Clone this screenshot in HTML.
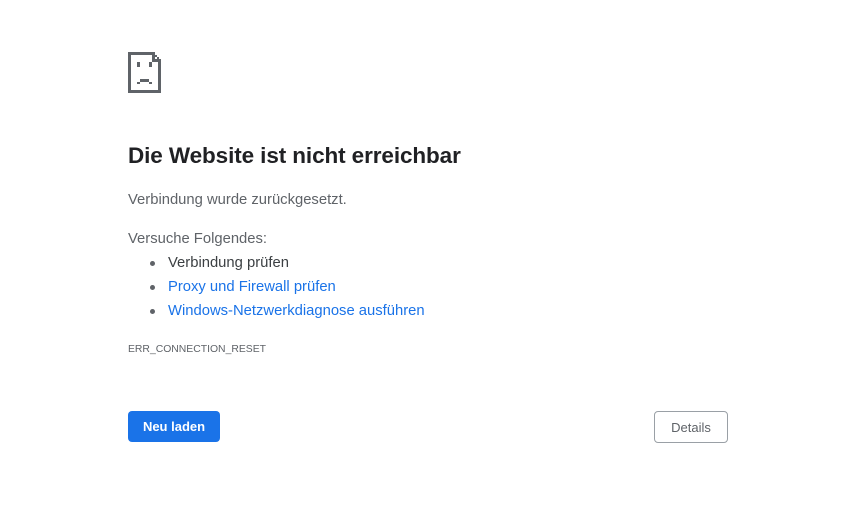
<!DOCTYPE html>
<html><head><meta charset="utf-8"><style>
html,body{margin:0;padding:0;background:#fff;width:867px;height:525px;overflow:hidden;font-family:"Liberation Sans",Arial,sans-serif}
.a{position:absolute;white-space:nowrap}
h1{position:absolute;left:128px;top:143px;margin:0;font-size:22.5px;font-weight:bold;color:#202124;letter-spacing:-0.1px}
.t{font-size:14.8px;color:#5f6368}
.l{color:#1a73e8}
.dot{position:absolute;width:5px;height:5px;border-radius:50%;background:#5f6368;left:150px}
.btn{position:absolute;box-sizing:border-box;font-size:13px;border-radius:4px;display:flex;align-items:center;justify-content:center}
</style></head><body>
<svg class="a" style="left:124px;top:48px" width="42" height="50" viewBox="124 48 42 50">
<g fill="#5f6368">
<rect x="128" y="52" width="25" height="3"/>
<rect x="128" y="52" width="3" height="41"/>
<rect x="128" y="90" width="33" height="3"/>
<rect x="158" y="60" width="3" height="33"/>
<rect x="152" y="52" width="3" height="10"/>
<rect x="152" y="59" width="9" height="3"/>
<rect x="155" y="55" width="2" height="2"/>
<rect x="157" y="57" width="2" height="2"/>
<rect x="137" y="62" width="3" height="5"/>
<rect x="149" y="62" width="3" height="5"/>
<rect x="140" y="79" width="9" height="3"/>
<rect x="137" y="82" width="3" height="2"/>
<rect x="149" y="82" width="3" height="2"/>
</g></svg>
<h1>Die Website ist nicht erreichbar</h1>
<div class="a t" style="left:128px;top:192px">Verbindung wurde zurückgesetzt.</div>
<div class="a t" style="left:128px;top:231px">Versuche Folgendes:</div>
<div class="dot" style="top:261px"></div>
<div class="a t" style="left:168px;top:255px;color:#3c4043">Verbindung prüfen</div>
<div class="dot" style="top:285px"></div>
<div class="a t l" style="left:168px;top:279px">Proxy und Firewall prüfen</div>
<div class="dot" style="top:309px"></div>
<div class="a t l" style="left:168px;top:303px">Windows-Netzwerkdiagnose ausführen</div>
<div class="a" style="left:128px;top:344px;font-size:10.4px;color:#5f6368">ERR_CONNECTION_RESET</div>
<div class="btn" style="left:128px;top:411px;width:92px;height:31px;background:#1a73e8;color:#fff;font-weight:bold">Neu laden</div>
<div class="btn" style="left:654px;top:411px;width:74px;height:32px;border:1px solid #9aa0a6;color:#5f6368">Details</div>
</body></html>
